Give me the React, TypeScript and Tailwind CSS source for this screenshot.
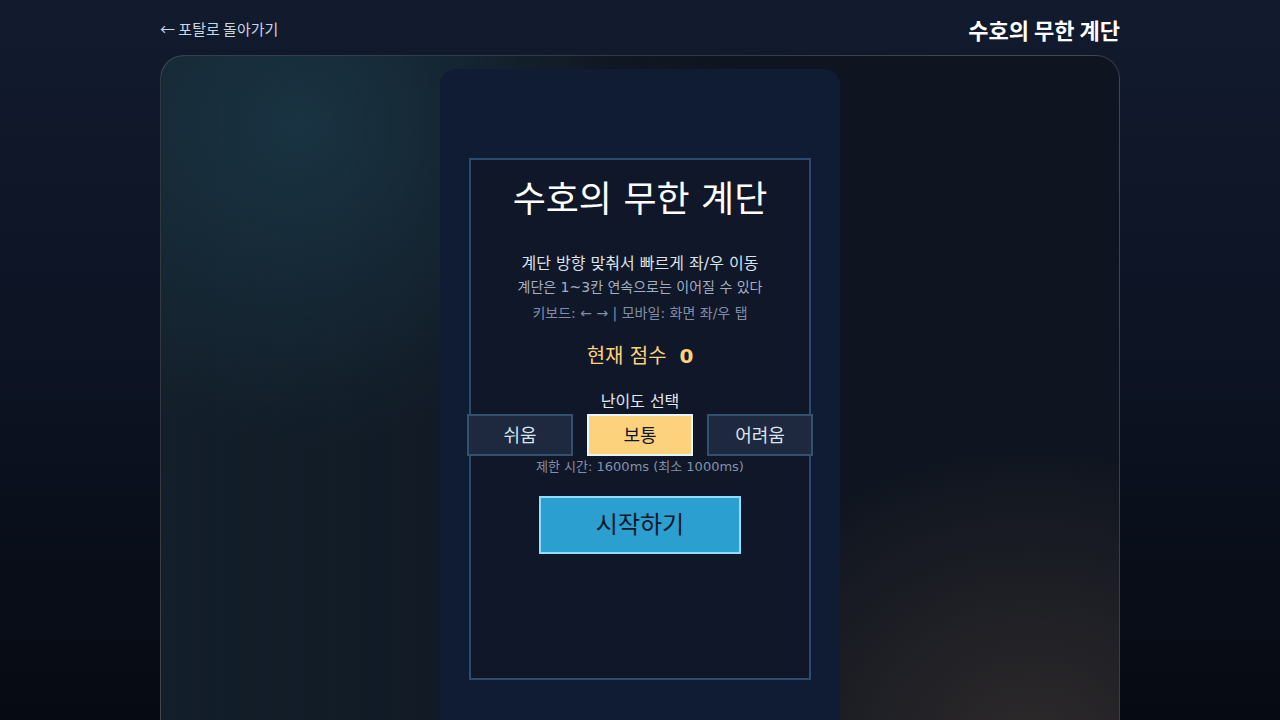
import { useState } from "react";

enum Level {
  Easy = "쉬움",
  Normal = "보통",
  Hard = "어려움",
}

const limits: Record<Level, number> = {
  [Level.Easy]: 2000,
  [Level.Normal]: 1600,
  [Level.Hard]: 1200,
};

const canvasFont = {
  fontFamily: '"DejaVu Sans", "Noto Sans CJK KR", sans-serif',
};

const App = () => {
  const [level, setLevel] = useState<Level>(Level.Normal);
  const [score] = useState(0);

  return (
    <div
      className="min-h-screen w-full overflow-hidden bg-[linear-gradient(180deg,#121a2e_0%,#0d1424_45%,#060a12_100%)]"
      style={{ fontFamily: '"Noto Sans CJK KR", "Noto Sans", sans-serif' }}
    >
      <div className="mx-auto w-[960px]">
        <header className="flex h-[55px] items-center justify-between pt-[3px]">
          <a className="text-[15px] text-slate-300" href="#">
            ← 포탈로 돌아가기
          </a>
          <h1 className="text-[22px] font-bold text-white">수호의 무한 계단</h1>
        </header>

        <section className="h-[665px] overflow-hidden rounded-t-[24px] border border-b-0 border-white/15 bg-[#0f1520] bg-[radial-gradient(circle_at_140px_70px,rgba(32,70,88,0.55),transparent_320px),radial-gradient(ellipse_340px_300px_at_870px_690px,rgba(70,58,50,0.55),transparent),linear-gradient(90deg,rgba(22,40,52,0.5),transparent_60%)] pt-[13px]">
          <div className="mx-auto flex h-[700px] w-[400px] justify-center rounded-[16px] bg-[#101c34] pt-[89px]">
            <div
              className="flex h-[522px] w-[342px] flex-col items-center border-2 border-[#2c4a6e] bg-[#101729] text-center"
              style={canvasFont}
            >
              <h2 className="mt-[20px] text-[36px] leading-[40px] text-white">
                수호의 무한 계단
              </h2>
              <p className="mt-[34px] text-[16px] leading-[20px] text-[#dbe2ec]">
                계단 방향 맞춰서 빠르게 좌/우 이동
              </p>
              <p className="mt-[3px] text-[14px] leading-[20px] text-[#a3afc2]">
                계단은 1~3칸 연속으로는 이어질 수 있다
              </p>
              <p className="mt-[6px] text-[14px] leading-[20px] text-[#7f8ea8]">
                키보드: ← → | 모바일: 화면 좌/우 탭
              </p>
              <p className="mt-[21px] text-[20px] leading-[24px] text-[#fcd27d]">
                현재 점수&nbsp;&nbsp;<span className="font-bold">{score}</span>
              </p>
              <p className="mt-[24px] text-[16px] leading-[20px] text-[#e2e8f0]">
                난이도 선택
              </p>
              <div className="mt-[2px] flex gap-[14px]">
                {Object.values(Level).map((item) => (
                  <button
                    key={item}
                    onClick={() => setLevel(item)}
                    className={
                      item === level
                        ? "h-[42px] w-[106px] shrink-0 border-2 border-[#e6f6ff] bg-[#fdd27c] text-[18px] text-[#0f172a]"
                        : "h-[42px] w-[106px] shrink-0 border-2 border-[#34506f] bg-[#1e293f] text-[18px] text-[#dbe3ee]"
                    }
                  >
                    {item}
                  </button>
                ))}
              </div>
              <p className="mt-[2px] text-[13px] leading-[18px] text-[#8391a8]">
                제한 시간: {limits[level]}ms (최소 1000ms)
              </p>
              <button className="mt-[20px] h-[58px] w-[202px] border-2 border-[#8fdcfb] bg-[#2a9fd0] text-[24px] text-[#0f172a]">
                시작하기
              </button>
            </div>
          </div>
        </section>
      </div>
    </div>
  );
};

export default App;
